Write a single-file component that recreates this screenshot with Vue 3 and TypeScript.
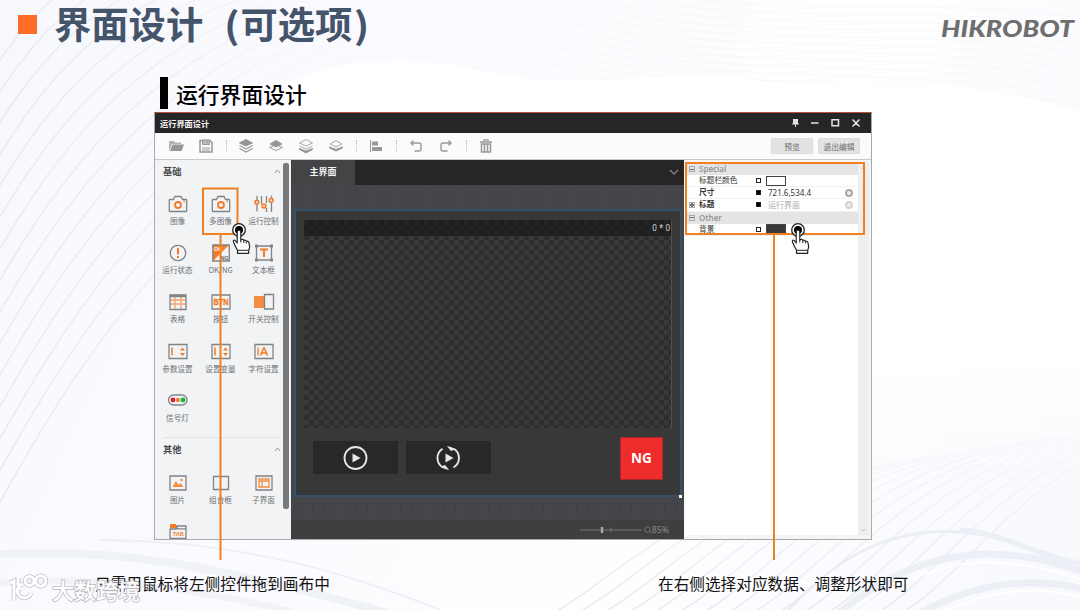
<script setup lang="ts">
interface Tool { icon: string; label: string }
interface Prop { name: string; marker: 'open' | 'solid'; value?: string; swatch?: string; bold?: boolean; muted?: boolean; expandable?: boolean; dot?: boolean }
interface Wave { d: string; w: number; c: string }

const basic: Tool[] = [
  { icon: 'camera', label: '图像' },
  { icon: 'camera', label: '多图像' },
  { icon: 'sliders', label: '运行控制' },
  { icon: 'status', label: '运行状态' },
  { icon: 'okng', label: 'OK/NG' },
  { icon: 'textbox', label: '文本框' },
  { icon: 'table', label: '表格' },
  { icon: 'btn', label: '按钮' },
  { icon: 'switch', label: '开关控制' },
  { icon: 'param', label: '参数设置' },
  { icon: 'param', label: '设置变量' },
  { icon: 'char', label: '字符设置' },
  { icon: 'light', label: '信号灯' },
]
const others: Tool[] = [
  { icon: 'picture', label: '图片' },
  { icon: 'group', label: '组合框' },
  { icon: 'sub', label: '子界面' },
  { icon: 'tab', label: '' },
]
const sections = [
  { title: '基础', tools: basic, cls: 'basic' },
  { title: '其他', tools: others, cls: 'others' },
]
const bar: string[] = ['folder', 'save', 'sep', 'top', 'up', 'bottom', 'down', 'sep', 'align', 'sep', 'undo', 'redo', 'sep', 'trash']

const groups: { title: string; rows: Prop[] }[] = [
  {
    title: 'Special',
    rows: [
      { name: '标题栏颜色', marker: 'open', swatch: 'white' },
      { name: '尺寸', marker: 'solid', value: '721.6,534.4', bold: true, dot: true },
      { name: '标题', marker: 'solid', value: '运行界面', bold: true, muted: true, expandable: true, dot: true },
    ],
  },
  { title: 'Other', rows: [{ name: '背景', marker: 'open', swatch: 'dark' }] },
]

const leftWaves: string[] = []
for (let i = 0; i < 15; i++) {
  const o = i * 32
  leftWaves.push(`M-20 ${90 + o} C${20 + i * 3} ${30 + o * 0.8} ${50 + i * 9} ${-20 + o * 0.45} ${150 + i * 20} ${-50 + o * 0.28}`)
}
const topWaves: string[] = []
for (let i = 0; i < 14; i++) {
  const o = i * 8
  topWaves.push(`M${560 - o} ${-30 + o} C${720 - o} ${30 + o * 0.8} ${930} ${-10 + o} 1090 ${20 + o * 1.1}`)
}
const rightWaves: string[] = []
for (let i = 0; i < 15; i++) {
  const o = i * 25
  rightWaves.push(`M${540 + o} 620 C${620 + o} 580 ${670 + o} ${500 - i * 3} ${850 + o} ${470 - i * 4}`)
}
const bands: Wave[] = [
  { d: 'M-10 555 C110 545 220 565 430 625', w: 8, c: '#eff2f7' },
  { d: 'M-10 584 C80 575 200 585 320 620', w: 7, c: '#f1f3f8' },
  { d: 'M100 540 C220 540 330 565 440 610', w: 2, c: '#eef0f5' },
  { d: 'M830 620 C900 560 980 530 1100 578', w: 7, c: '#eceff5' },
  { d: 'M840 625 C910 566 980 540 1100 586', w: 2, c: '#ffffff' },
  { d: 'M910 620 C970 580 1040 574 1100 594', w: 7, c: '#eceff5' },
  { d: 'M920 624 C980 588 1040 582 1100 602', w: 2, c: '#ffffff' },
  { d: 'M780 620 C840 548 900 528 960 532 S1060 570 1100 572', w: 3, c: '#ebeef4' },
  { d: 'M960 530 C1000 530 1040 560 1100 566', w: 5, c: '#eceff5' },
]
</script>

<template>
  <div class="slide">
    <svg class="backdrop" viewBox="0 0 1080 610">
      <defs>
        <linearGradient id="fadeRight" gradientUnits="userSpaceOnUse" x1="0" x2="380" y1="0" y2="0"><stop stop-color="#e6e9f0" /><stop offset=".45" stop-color="#eff0f6" /><stop offset="1" stop-color="#f9f9fd" /></linearGradient>
        <linearGradient id="fadeUp" gradientUnits="userSpaceOnUse" x1="0" x2="0" y1="610" y2="440"><stop stop-color="#e4e7ef" /><stop offset="1" stop-color="#f6f7fb" /></linearGradient>
        <linearGradient id="hill" x1="0" x2="0" y1="0" y2="1"><stop stop-color="#fff" /><stop offset=".7" stop-color="#fff" /><stop offset="1" stop-color="#fff" stop-opacity="0" /></linearGradient>
      </defs>
      <path v-for="(d, i) in leftWaves" :key="'l' + i" :d="d" fill="none" stroke="url(#fadeRight)" stroke-width="1.400" />
      <path v-for="(d, i) in topWaves" :key="'t' + i" :d="d" fill="none" stroke="#f7f8fb" />
      <path d="M270 95 C310 62 390 50 490 72 S690 66 740 78 S960 70 1080 112 V480 H270Z" fill="url(#hill)" />
      <path v-for="(d, i) in rightWaves" :key="'r' + i" :d="d" fill="none" stroke="url(#fadeUp)" stroke-width="1.200" />
      <path v-for="(w, i) in bands" :key="'b' + i" :d="w.d" fill="none" :stroke="w.c" :stroke-width="w.w" />
    </svg>

    <header class="head">
      <span class="bullet"></span>
      <h1>界面设计<span class="open">(</span>可选项<span class="close">)</span></h1>
      <svg class="brand" viewBox="0 0 139 30">
        <text x="2" y="22.500" textLength="133" lengthAdjust="spacingAndGlyphs">HIKROBOT</text>
      </svg>
    </header>

    <div class="subtitle"><i></i><h2>运行界面设计</h2></div>

    <section class="window">
      <div class="titlebar">
        <span>运行界面设计</span>
        <svg width="72" height="14" viewBox="0 0 72 14" fill="none" stroke="#e4e4e4" stroke-width="1.500">
          <path d="M2 3h5v5H2z" fill="#e4e4e4" stroke="none" /><path d="M1 8h7M4.500 8v3" stroke-width="1" />
          <path d="M20 7h7.500M41 3.800h6.500v6H41zM61.500 3.500l7 7M68.500 3.500l-7 7" />
        </svg>
      </div>

      <div class="toolbar">
        <template v-for="(b, i) in bar" :key="i">
          <span v-if="b === 'sep'" class="sep"></span>
          <svg v-else class="tool" width="16" height="16" viewBox="0 0 16 16" fill="none" stroke="#999" stroke-width="1">
            <g v-if="b === 'folder'" fill="#969696" stroke="none"><path d="M1 13V3h5l1 1.500h6V6H4z" opacity=".7" /><path d="M4.500 6.500H16L13.500 13H2z" /></g>
            <g v-else-if="b === 'save'"><path d="M2 2.500h10l2 2V14H2z" stroke-width="1.500" /><path d="M4.500 2v4.500h7V2zM9 3v2" fill="#bbb" /><path d="M4 10h8M4 12h8" /></g>
            <g v-else-if="b === 'top'"><path d="M8 1.500L14.500 5 8 8 1.500 5z" fill="#969696" /><path d="M1.500 7.500L8 11l6.500-3.500M1.500 10.500L8 14l6.500-3.500" stroke-width="1.300" /></g>
            <g v-else-if="b === 'up'"><path d="M8 2.500L14 6 8 9 2 6z" fill="#969696" /><path d="M5 8L1.500 9.500 8 12.500l6.500-3L11 8" /></g>
            <g v-else-if="b === 'bottom'"><path d="M8 1.500L14.500 5 8 8 1.500 5zM1.500 8L8 11l6.500-3" stroke="#aaa" /><path d="M1.500 10.500L8 13l6.500-2.500v1L8 15l-6.500-3.500z" fill="#969696" /></g>
            <g v-else-if="b === 'down'"><path d="M8 2.500L14 6 8 9 2 6z" stroke="#aaa" /><path d="M1.500 9L8 11.500 14.500 9v1L8 13 1.500 10z" fill="#969696" /></g>
            <g v-else-if="b === 'align'" fill="#999" stroke="none"><path d="M2 2h1v12H2zM4 3.500h6v4H4zM4 9h10v4H4z" /></g>
            <path v-else-if="b === 'undo'" d="M5.500 2.500L3 5l2.500 2.500M3 5h8q2 0 2 2v4q0 2-2 2H6.500" stroke-width="1.400" />
            <path v-else-if="b === 'redo'" d="M10.500 2.500L13 5l-2.500 2.500M13 5H5Q3 5 3 7v4q0 2 2 2h4.500" stroke-width="1.400" />
            <g v-else><path d="M2 4h12M6 3V1.800h4V3" stroke-width="1.300" /><path d="M3.500 6h9v8h-9zM6.500 6v8M9.500 6v8" stroke-width="1.500" /></g>
          </svg>
        </template>
        <button class="first">预览</button>
        <button>退出编辑</button>
      </div>

      <div class="body">
        <aside class="palette">
          <div v-for="s in sections" :key="s.title" class="section" :class="s.cls">
            <h3>{{ s.title }}<svg width="7" height="5" viewBox="0 0 7 5"><path d="M1 4l2.500-3L6 4" fill="none" stroke="#999" /></svg></h3>
            <div class="cells">
              <div v-for="(t, i) in s.tools" :key="i" class="cell">
                <svg width="22" height="22" viewBox="0 0 22 22" fill="none" stroke="#818385" stroke-width="1.300">
                  <g v-if="t.icon === 'camera'"><path d="M3 6.500h3.500L8 3.500h6l1.500 3H19q.7 0 .7.700v10.600q0 .700-.7.700H3q-.7 0-.7-.700V7.200q0-.7.700-.7z" /><circle cx="11" cy="12" r="3" stroke="#f47b28" stroke-width="1.800" /><path d="M16.500 8.500h1.500" stroke="#f47b28" /></g>
                  <g v-else-if="t.icon === 'sliders'"><path d="M4 3v4M4 11.500v7M8.500 3v8M13.500 3v7M13.500 15v4M18.500 2.500v2M18.500 10v9" /><g stroke="#f47b28" stroke-width="1.600"><circle cx="3.800" cy="9.300" r="1.900" /><circle cx="11" cy="13" r="1.900" /><circle cx="18.200" cy="7.300" r="1.900" /></g></g>
                  <g v-else-if="t.icon === 'status'"><circle cx="11" cy="11" r="7.700" /><path d="M11 6v6.500M11 14v2" stroke="#f47b28" stroke-width="2" /></g>
                  <g v-else-if="t.icon === 'okng'"><path d="M3 3h16L3 19z" fill="#f47b28" stroke="none" /><path d="M2.800 3h16.500v16H2.800z" /><text x="4" y="9" class="tiny white">OK</text><text x="10.500" y="17.500" class="tiny grey">NG</text></g>
                  <g v-else-if="t.icon === 'textbox'"><path d="M3.500 4h15v14h-15z" /><path d="M2 2.500h3v3H2zM17 2.500h3v3h-3zM2 16.500h3v3H2zM17 16.500h3v3h-3z" fill="#818385" stroke="none" /><path d="M7 7.500h8M11 7v8" stroke="#f47b28" stroke-width="2" /></g>
                  <g v-else-if="t.icon === 'table'"><path d="M3 9h16M3 13h16M8 6v12M14 6v12" stroke="#f7a46c" /><path d="M3 4h16v14.500H3z" /><path d="M3 5h16" stroke-width="2.500" /></g>
                  <g v-else-if="t.icon === 'btn'"><path d="M2 4h18v14H2z" /><text x="3.500" y="14.200" class="btntext" textLength="15" lengthAdjust="spacingAndGlyphs">BTN</text></g>
                  <g v-else-if="t.icon === 'switch'"><path d="M1 5h10v12H1z" fill="#f58c42" stroke="none" /><path d="M11.500 3.500h9v14.500h-9z" /></g>
                  <g v-else-if="t.icon === 'param'"><path d="M2 3.500h18v14H2z" /><path d="M5 6.500v8" stroke="#f47b28" stroke-width="1.500" /><path d="M13 9.500l2.500-3 2.500 3zM13 12l2.500 3 2.500-3z" fill="#f47b28" stroke="none" /></g>
                  <g v-else-if="t.icon === 'char'"><path d="M2 3.500h18v14H2z" /><path d="M5 6.500v8" stroke="#f47b28" /><path d="M7.500 14.500l3.200-7.500h.6l3.200 7.500M8.500 12h5" stroke="#f47b28" stroke-width="1.600" /></g>
                  <g v-else-if="t.icon === 'light'"><rect x="1.500" y="5" width="18.500" height="10" rx="5" /><circle cx="6" cy="10" r="2.400" fill="#dc1f26" stroke="none" /><circle cx="11" cy="10" r="2.200" fill="#f48732" stroke="none" /><circle cx="16" cy="10" r="2.400" fill="#18b24b" stroke="none" /></g>
                  <g v-else-if="t.icon === 'picture'"><path d="M3 4h16v14H3z" /><path d="M5.500 15l3.500-6 2.500 4 2-2 3 4z" fill="#f58c42" stroke="none" /><circle cx="14.500" cy="8" r="1.300" fill="#f58c42" stroke="none" /></g>
                  <path v-else-if="t.icon === 'group'" d="M3.500 4.500h15v13h-15z" />
                  <g v-else-if="t.icon === 'sub'"><path d="M3 4h16v14H3z" /><path d="M6 7h10v8H6zM6 9h10M9 9v6" stroke="#f58c42" /></g>
                  <g v-else><path d="M3 7.500V17.500h16V5H9v3H3M9 5l1.500 2.800h8" /><path d="M3 3h6v4H3z" fill="#f47b28" stroke="none" /><text x="5.800" y="15" class="tiny orange">TAB</text></g>
                </svg>
                <span v-if="t.label">{{ t.label }}</span>
              </div>
            </div>
          </div>
          <i class="scroll"></i>
        </aside>

        <main class="stage">
          <div class="tabs"><b>主界面</b><svg width="10" height="7" viewBox="0 0 10 7"><path d="M1 1l4 4.200L9 1" fill="none" stroke="#8b8b8b" stroke-width="1.200" /></svg></div>
          <div class="grid">
            <div class="frame">
              <div class="checker"><div class="strip">0 * 0</div></div>
              <div class="controls">
                <div class="play"><svg width="26" height="26" viewBox="0 0 26 26"><circle cx="12.500" cy="13" r="11" fill="none" stroke="#e8e8e8" stroke-width="1.800" /><path d="M9.500 8.500l8 4.500-8 4.500z" fill="#e8e8e8" /></svg></div>
                <div class="play"><svg width="26" height="26" viewBox="0 0 26 26"><path d="M6.500 3.800A11 11 0 0 0 7 22.600M17.500 22.500A11 11 0 0 0 17.500 3.500" fill="none" stroke="#e8e8e8" stroke-width="1.900" /><path d="M11 1.200Q15 1 19 4.500l-4 1.500zM13 24.800Q9 25 5 21.500l4-1.500zM9.500 8.500l8 4.500-8 4.500z" fill="#e8e8e8" /></svg></div>
                <div class="ng">NG</div>
              </div>
              <i class="handle"></i>
            </div>
          </div>
          <div class="zoom">
            <svg width="72" height="14" viewBox="0 0 72 14" fill="none" stroke="#777"><path d="M0 7h62" /><path d="M22 4v6" stroke="#aaa" stroke-width="2.400" /><path d="M31 4.500v5" /><circle cx="67.500" cy="6.500" r="2.700" /><path d="M69.500 8.500l2 2" /></svg><span>85%</span>
          </div>
        </main>

        <aside class="props">
          <div class="list">
            <div v-for="g in groups" :key="g.title">
              <div class="group"><i class="box minus"></i>{{ g.title }}</div>
              <div v-for="p in g.rows" :key="p.name" class="row">
                <span class="name" :class="{ bold: p.bold }"><i v-if="p.expandable" class="box minus plus"></i>{{ p.name }}</span>
                <i class="marker" :class="p.marker"></i>
                <i v-if="p.swatch" class="swatch" :class="p.swatch"></i>
                <span v-else class="value" :class="{ muted: p.muted }">{{ p.value }}</span>
                <i v-if="p.dot" class="dot" :class="{ pale: p.muted }"></i>
              </div>
            </div>
          </div>
          <div class="gutter"><svg width="5" height="4" viewBox="0 0 5 4"><path d="M.5 3l2-2 2 2" fill="none" stroke="#bbb" /></svg><svg width="5" height="4" viewBox="0 0 5 4"><path d="M.5 1l2 2 2-2" fill="none" stroke="#bbb" /></svg></div>
        </aside>
      </div>
    </section>

    <footer class="captions">
      <p class="left">只需用鼠标将左侧控件拖到画布中</p>
      <p>在右侧选择对应数据、调整形状即可</p>
    </footer>

    <svg class="marks" viewBox="0 0 1080 610" fill="none">
      <defs>
        <g id="hand">
          <circle r="6.300" fill="#fff" stroke="#222" stroke-width="1.300" />
          <circle r="4" fill="#000" />
          <path d="M-1.800 1.500Q0-1.500 1.800 1.500V10l1-.5q1.500-.6 2 1 1.800-1 2.500.8 2-.4 2.700 1.500 1.400 4-.3 7.500v3H-1.500v-3Q-4 16-5.500 12q-.8-2.500 1.700-1.500l2 2.500z" fill="#fff" stroke="#222" stroke-width="1.200" stroke-linejoin="round" />
          <path d="M-1.500 20.300H9.500M1.800 10v2.500M4.800 11v2M7.300 12v1.500" stroke="#222" />
        </g>
      </defs>
      <g stroke="#f08121" stroke-width="2"><path d="M203 188.500h34.500V234H203zM220.500 234v326M686 163h178v71H686zM774 234v326" /></g>
      <use href="#hand" x="239" y="230" />
      <use href="#hand" x="798" y="230" />
      <g class="watermark">
        <path d="M10 583l4-2v20M31 593a7 7 0 1 1-8-9M18 578v7q0 4 4 4M34 581a4.500 4.500 0 1 0-9 0 4.500 4.500 0 0 0 9 0zM46 581a5.200 5.200 0 1 0-10.400 0 5.200 5.200 0 0 0 10.400 0z" class="halo" />
        <path d="M10 583l4-2v20M31 593a7 7 0 1 1-8-9M18 578v7q0 4 4 4M34 581a4.500 4.500 0 1 0-9 0 4.500 4.500 0 0 0 9 0zM46 581a5.200 5.200 0 1 0-10.400 0 5.200 5.200 0 0 0 10.400 0z" class="core" />
        <text x="52" y="599">大数跨境</text>
      </g>
    </svg>
  </div>
</template>

<style>
body { margin: 0; overflow: hidden; }
</style>

<style scoped>
* { box-sizing: border-box; }
svg { display: block; flex: none; }
i { font-style: normal; flex: none; }
h1, h2, h3, p { margin: 0; white-space: nowrap; }
.slide { position: relative; width: 1080px; height: 610px; overflow: hidden; background: linear-gradient(115deg, #f7f8fd 0%, #fbfbff 35%, #fefeff 65%, #f8f9fd 100%); font-family: "Liberation Sans", "Noto Sans CJK SC", sans-serif; }
.backdrop, .marks { position: absolute; inset: 0; width: 1080px; height: 610px; }
.marks { pointer-events: none; }
.head { position: relative; display: flex; align-items: flex-start; height: 77px; padding: 0 2px 0 18px; }
.bullet { width: 19px; height: 19px; margin-top: 15px; background: #ff6c27; }
h1 { display: flex; margin-left: 17px; font: 700 37.3px/46px "Noto Sans CJK SC", sans-serif; color: #44546b; }
h1 span { width: 37.3px; font-size: 36px; transform: scaleX(1.15); }
h1 .open { padding-right: 3px; text-align: right; }
h1 .close { padding-left: 4px; }
.brand { width: 139px; height: 30px; margin: 14px 0 0 auto; }
.brand text { font: italic 900 23.500px Lato, sans-serif; fill: #6e6e6e; }
.subtitle { position: relative; display: flex; height: 35px; padding-left: 160px; }
.subtitle i { width: 8px; height: 32px; background: #000; }
h2 { margin-left: 8px; font: 500 21.8px/34px "Noto Sans CJK SC", sans-serif; color: #000; }
.window { position: relative; display: flex; flex-direction: column; width: 718px; height: 428px; margin-left: 154px; border: 1px solid #a9a9aa; border-top: 1.500px solid #b5523f; overflow: hidden; background: #fbfbfd; }
.titlebar { display: flex; align-items: center; justify-content: space-between; height: 20px; padding: 0 8px 0 5px; background: #262626; color: #f4f4f4; font: 600 8.200px/20px "Noto Sans CJK SC", sans-serif; flex: none; }
.toolbar { display: flex; align-items: center; height: 27px; padding-left: 6px; border-bottom: 1px solid #c9c9cb; flex: none; }
.tool { margin: 0 7px; }
.sep { width: 1px; height: 12px; margin: 0 4.500px; border-left: 1px dotted #bbb; }
.toolbar button { width: 42px; height: 16px; margin: 0 11px 0 0; padding: 0; border: 1px solid #dcdcdc; border-radius: 1px; background: #e2e2e3; color: #6e6e6e; font: 7.800px/13px "Noto Sans CJK SC", sans-serif; }
.toolbar button.first { margin: 0 5px 0 auto; }
.body { display: flex; flex: 1; min-height: 0; }
.palette { position: relative; width: 136px; height: 100%; flex: none; overflow: hidden; background: #f1f3f5; }
.section h3 { display: flex; align-items: center; justify-content: space-between; width: 135px; height: 22px; padding: 0 9px 0 8px; font: 600 9.200px/22px "Noto Sans CJK SC", sans-serif; color: #4b4d50; }
.section.others { width: 119px; margin: -2px 10px 0 8px; border-top: 1px solid #e1e3e5; }
.others h3 { margin-left: -8px; height: 23px; }
.cells { display: grid; grid-template-columns: repeat(3, 43px); grid-auto-rows: 49.200px; padding: 11px 0 0 1px; }
.others .cells { margin-left: -8px; }
.cell { display: flex; flex-direction: column; align-items: center; font: 7.600px/11px "Noto Sans CJK SC", sans-serif; color: #6f7173; white-space: nowrap; }
.tiny { font: 700 5.500px "Liberation Sans", sans-serif; stroke: none; }
.white { fill: #fff; }
.grey { fill: #666; }
.orange { fill: #f47b28; }
.btntext { font: 700 8.500px "Liberation Sans", sans-serif; fill: #f47b28; stroke: #f47b28; stroke-width: .4px; }
.scroll { position: absolute; left: 128px; top: 3px; width: 6px; height: 346px; border-radius: 2px; background: #77797b; }
.stage { display: flex; flex-direction: column; width: 393px; flex: none; background: #434446; }
.tabs { display: flex; justify-content: space-between; align-items: center; height: 25px; padding-right: 5px; background: #272526; flex: none; }
.tabs b { width: 64px; height: 25px; background: #434446; color: #f5f5f5; font: 600 9px/24px "Noto Sans CJK SC", sans-serif; text-align: center; }
.grid { flex: 1; padding: 24px 2px 0 3px; background: repeating-linear-gradient(90deg, transparent 0 10px, #414245 10px 11px), repeating-linear-gradient(#454649 0 10px, #424346 10px 11px); }
.frame { position: relative; width: 388px; height: 288px; padding: 9px 8px; border: 2px solid #34506b; background: #383838; }
.checker { height: 208px; width: 368px; border-right: 1px solid #505050; background: conic-gradient(#2d2d2d 25%, #393939 0 50%, #2d2d2d 0 75%, #393939 0) 0 0 / 10px 10px; }
.strip { height: 16px; padding-right: 1px; background: #1118; color: #ddd; font: 8px/15px "Noto Sans", sans-serif; text-align: right; }
.controls { display: flex; padding: 9px 0 0 9px; }
.play { display: flex; align-items: center; justify-content: center; width: 85px; height: 33px; margin: 4px 8px 0 0; background: #272928; }
.ng { width: 43px; height: 43px; margin-left: 121px; border: 1.500px solid #a82828; background: #ef2c2c; color: #fff; font: 700 13.500px/40px "Open Sans", sans-serif; text-align: center; }
.handle { position: absolute; right: -2px; bottom: -3px; width: 3px; height: 3px; background: #fff; }
.zoom { display: flex; align-items: center; justify-content: flex-end; height: 19px; padding-right: 15px; background: #3f3f41; color: #8b8b8b; font: 8.700px "Noto Sans", sans-serif; flex: none; }
.props { display: flex; flex: 1; padding: 3px 2px 4px 1px; background: #f5f5f6; }
.list { width: 173px; background: #fff; }
.group { display: flex; align-items: center; height: 12px; padding-left: 4px; background: #e4e4e4; color: #969696; font: 600 8px/12px "Noto Sans", sans-serif; }
.box { width: 6px; height: 6px; margin-right: 4px; border: 1px solid #aaa; }
.minus { background: linear-gradient(#777, #777) center / 4px 1px no-repeat; }
.plus { background: linear-gradient(#777, #777) center / 4px 2px no-repeat, linear-gradient(#777, #777) center / 2px 4px no-repeat; }
.row { display: flex; align-items: center; height: 12.200px; border-bottom: 1px solid #f1f1f1; font: 7.700px/11px "Noto Sans", "Noto Sans CJK SC", sans-serif; color: #333; }
.name { display: flex; align-items: center; width: 71px; padding-left: 14px; }
.name.bold { font-weight: 700; }
.name .box { margin-left: -10px; }
.marker { width: 5px; height: 5px; border: 1px solid #222; }
.solid { background: #000; }
.swatch { width: 20px; height: 10px; margin-left: 5px; border: 1px solid #444; }
.dark { background: #393939; }
.value { margin-left: 7px; font-size: 8px; }
.muted { color: #aaa; }
.dot { width: 8px; height: 8px; margin: 0 5px 0 auto; border: 2.500px solid #a9a9a9; border-radius: 50%; background: #eee; }
.pale { border-color: #d2d2d2; }
.gutter { display: flex; flex-direction: column; align-items: center; justify-content: space-between; width: 11px; padding: 3px 0; background: #eeeeef; }
.captions { position: relative; display: flex; padding: 32px 0 0 95px; font: 15.670px/24px "Noto Sans CJK SC", sans-serif; color: #111; }
.captions .left { width: 563px; }
.watermark text { font: 500 22px "Noto Sans CJK SC", sans-serif; fill: #fff; stroke: #b9bbc0; stroke-width: 1.600px; paint-order: stroke; }
.halo { stroke: #bfc1c6; stroke-width: 4.500px; }
.core { stroke: #fff; stroke-width: 3px; }
</style>
